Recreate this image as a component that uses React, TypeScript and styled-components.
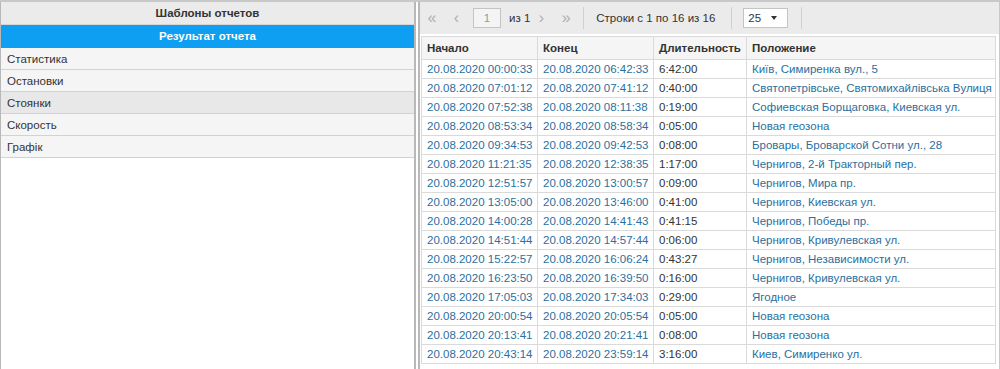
import styled, { createGlobalStyle } from 'styled-components';

const GlobalStyle = createGlobalStyle`
    html, body {
        margin: 0;
        padding: 0;
        background: #fff;
    }
    body {
        font-family: "Liberation Sans", Arial, sans-serif;
        font-size: 11.5px;
        color: #333;
    }
`

const Page = styled.div`
    display: flex;
    width: 1000px;
    height: 369px;
    border-top: 2px solid #c8c8c8;
    box-sizing: border-box;
    overflow: hidden;
`

const LeftPanel = styled.div`
    width: 416px;
    flex: 0 0 416px;
    display: flex;
    flex-direction: column;
    border-left: 1px solid #b8b8b8;
    border-right: 2px solid #b8b8b8;
    box-sizing: border-box;
`

const PanelTitle = styled.div<{ $active?: boolean }>`
    height: 22px;
    display: flex;
    align-items: center;
    justify-content: center;
    font-weight: bold;
    background: ${p => p.$active ? '#0e9ff2' : '#ebebeb'};
    color: ${p => p.$active ? '#fff' : '#333'};
    border-bottom: 1px solid ${p => p.$active ? '#0e9ff2' : '#d6d6d6'};
`

const MenuItem = styled.div<{ $hover?: boolean }>`
    height: 21px;
    display: flex;
    align-items: center;
    padding-left: 6px;
    background: ${p => p.$hover ? '#e8e8e8' : '#f5f5f5'};
    border-bottom: 1px solid #d2d2d2;
    color: #333;
`

const RightPanel = styled.div`
    flex: 1;
    margin-left: 2px;
    display: flex;
    flex-direction: column;
    border-left: 2px solid #b8b8b8;
    border-right: 2px solid #c8c8c8;
    box-sizing: border-box;
`

const Toolbar = styled.div`
    height: 32px;
    flex: 0 0 32px;
    display: flex;
    align-items: center;
    background: #ebebeb;
    padding-left: 4px;
    box-sizing: border-box;
`

const NavButton = styled.span<{ $w: number }>`
    width: ${p => p.$w}px;
    text-align: center;
    color: #b0b0b0;
    font-size: 16px;
    line-height: 16px;
`

const PageInput = styled.div`
    width: 26px;
    height: 18px;
    border: 1px solid #c4c4c4;
    background: #f4f4f4;
    color: #999;
    display: flex;
    align-items: center;
    justify-content: center;
    margin-right: 8px;
`

const Label = styled.span`
    color: #333;
`

const Separator = styled.span<{ $l: number; $r: number }>`
    width: 1px;
    height: 22px;
    background: #d0d0d0;
    margin: 0 ${p => p.$r}px 0 ${p => p.$l}px;
`

const Select = styled.div`
    width: 39px;
    height: 18px;
    border: 1px solid #c4c4c4;
    background: #fff;
    display: flex;
    align-items: center;
    padding-left: 4px;
    gap: 10px;

    &::after {
        content: '';
        border-left: 3px solid transparent;
        border-right: 3px solid transparent;
        border-top: 4px solid #333;
    }
`

const TableWrap = styled.div`
    flex: 1;
    padding: 2px 3px 0 1px;
`

const Table = styled.table`
    border-collapse: collapse;
    width: 575px;
    table-layout: fixed;

    th, td {
        border: 1px solid #dadada;
        padding: 0 5px;
        text-align: left;
        white-space: nowrap;
        overflow: hidden;
    }
    th {
        height: 22px;
        background: #f5f5f5;
        font-weight: bold;
        color: #333;
    }
    td {
        height: 18px;
        color: #2a6fa0;
    }
    td.plain {
        color: #333;
    }
`

const menu = ['Статистика', 'Остановки', 'Стоянки', 'Скорость', 'Графік'];

const rows: [string, string, string, string][] = [
    ['20.08.2020 00:00:33', '20.08.2020 06:42:33', '6:42:00', 'Київ, Симиренка вул., 5'],
    ['20.08.2020 07:01:12', '20.08.2020 07:41:12', '0:40:00', 'Святопетрівське, Святомихайлівська Вулиця'],
    ['20.08.2020 07:52:38', '20.08.2020 08:11:38', '0:19:00', 'Софиевская Борщаговка, Киевская ул.'],
    ['20.08.2020 08:53:34', '20.08.2020 08:58:34', '0:05:00', 'Новая геозона'],
    ['20.08.2020 09:34:53', '20.08.2020 09:42:53', '0:08:00', 'Бровары, Броварской Сотни ул., 28'],
    ['20.08.2020 11:21:35', '20.08.2020 12:38:35', '1:17:00', 'Чернигов, 2-й Тракторный пер.'],
    ['20.08.2020 12:51:57', '20.08.2020 13:00:57', '0:09:00', 'Чернигов, Мира пр.'],
    ['20.08.2020 13:05:00', '20.08.2020 13:46:00', '0:41:00', 'Чернигов, Киевская ул.'],
    ['20.08.2020 14:00:28', '20.08.2020 14:41:43', '0:41:15', 'Чернигов, Победы пр.'],
    ['20.08.2020 14:51:44', '20.08.2020 14:57:44', '0:06:00', 'Чернигов, Кривулевская ул.'],
    ['20.08.2020 15:22:57', '20.08.2020 16:06:24', '0:43:27', 'Чернигов, Независимости ул.'],
    ['20.08.2020 16:23:50', '20.08.2020 16:39:50', '0:16:00', 'Чернигов, Кривулевская ул.'],
    ['20.08.2020 17:05:03', '20.08.2020 17:34:03', '0:29:00', 'Ягодное'],
    ['20.08.2020 20:00:54', '20.08.2020 20:05:54', '0:05:00', 'Новая геозона'],
    ['20.08.2020 20:13:41', '20.08.2020 20:21:41', '0:08:00', 'Новая геозона'],
    ['20.08.2020 20:43:14', '20.08.2020 23:59:14', '3:16:00', 'Киев, Симиренко ул.'],
];

function App() {
    return (
        <>
            <GlobalStyle />
            <Page>
                <LeftPanel>
                    <PanelTitle>Шаблоны отчетов</PanelTitle>
                    <PanelTitle $active>Результат отчета</PanelTitle>
                    {menu.map((item, i) => (
                        <MenuItem key={item} $hover={i === 2}>{item}</MenuItem>
                    ))}
                </LeftPanel>
                <RightPanel>
                    <Toolbar>
                        <NavButton $w={16}>«</NavButton>
                        <NavButton $w={33}>‹</NavButton>
                        <PageInput>1</PageInput>
                        <Label>из 1</Label>
                        <NavButton $w={22}>›</NavButton>
                        <NavButton $w={28}>»</NavButton>
                        <Separator $l={3} $r={12} />
                        <Label>Строки с 1 по 16 из 16</Label>
                        <Separator $l={16} $r={11} />
                        <Select>25</Select>
                        <Separator $l={13} $r={0} />
                    </Toolbar>
                    <TableWrap>
                        <Table>
                            <colgroup>
                                <col style={{ width: 116 }} />
                                <col style={{ width: 116 }} />
                                <col style={{ width: 93 }} />
                                <col />
                            </colgroup>
                            <thead>
                                <tr>
                                    <th>Начало</th>
                                    <th>Конец</th>
                                    <th>Длительность</th>
                                    <th>Положение</th>
                                </tr>
                            </thead>
                            <tbody>
                                {rows.map(r => (
                                    <tr key={r[0]}>
                                        <td>{r[0]}</td>
                                        <td>{r[1]}</td>
                                        <td className="plain">{r[2]}</td>
                                        <td>{r[3]}</td>
                                    </tr>
                                ))}
                            </tbody>
                        </Table>
                    </TableWrap>
                </RightPanel>
            </Page>
        </>
    );
}

export default App;
